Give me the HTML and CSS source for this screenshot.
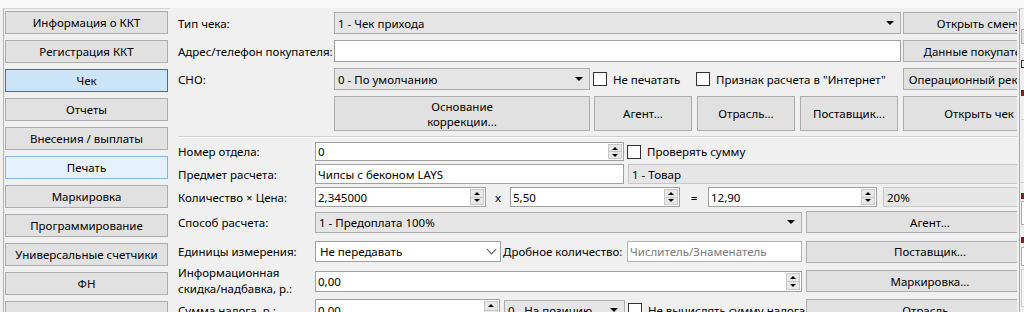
FILE: index.html
```html
<!DOCTYPE html>
<html lang="ru">
<head>
  <meta charset="UTF-8">
  <title>Чек</title>
  <link rel="stylesheet" href="styles.css">
</head>
<body>
  <div class="topbar"></div>
  <div class="frame">
    <div class="side">
      <div class="nav-btn">Информация о ККТ</div>
      <div class="nav-btn">Регистрация ККТ</div>
      <div class="nav-btn active">Чек</div>
      <div class="nav-btn">Отчеты</div>
      <div class="nav-btn">Внесения / выплаты</div>
      <div class="nav-btn hover">Печать</div>
      <div class="nav-btn">Маркировка</div>
      <div class="nav-btn">Программирование</div>
      <div class="nav-btn">Универсальные счетчики</div>
      <div class="nav-btn">ФН</div>
      <div class="nav-btn"></div>
    </div>

    <div class="main">
      <!-- шапка чека -->
      <div class="row">
        <div class="lbl1">Тип чека:</div>
        <div class="combo w567">1 - Чек прихода<span class="arr"></span></div>
        <div class="btn rbtn">Открыть смену</div>
      </div>
      <div class="row">
        <div class="lbl1">Адрес/телефон покупателя:</div>
        <div class="input w567"></div>
        <div class="btn rbtn">Данные покупателя</div>
      </div>
      <div class="row">
        <div class="lbl1">СНО:</div>
        <div class="combo w256">0 - По умолчанию<span class="arr"></span></div>
        <div class="chk-group g100"><span class="chk"></span>Не печатать</div>
        <div class="chk-group g205"><span class="chk"></span>Признак расчета в "Интернет"</div>
        <div class="btn rbtn">Операционный реквизит</div>
      </div>
      <div class="row tall">
        <div class="lbl1"></div>
        <div class="btn w256">Основание<br>коррекции...</div>
        <div class="btn w98 ml4">Агент...</div>
        <div class="btn w98 ml5">Отрасль...</div>
        <div class="btn w98 ml5">Поставщик...</div>
        <div class="btn rbtn">Открыть чек</div>
      </div>

      <div class="sep"></div>

      <!-- позиция -->
      <div class="row2 h19">
        <div class="lbl2">Номер отдела:</div>
        <div class="spin w309"><span class="val">0</span><span class="arrows"><i class="up"></i><i class="dn"></i></span></div>
        <div class="chk-group ml3"><span class="chk"></span>Проверять сумму</div>
      </div>
      <div class="row2 h20 mt3">
        <div class="lbl2">Предмет расчета:</div>
        <div class="input w309"><span class="val">Чипсы с беконом LAYS</span></div>
        <div class="combo flat w420 ml4">1 - Товар</div>
      </div>
      <div class="row2 h20 mt3">
        <div class="lbl2">Количество × Цена:</div>
        <div class="spin w171"><span class="val">2,345000</span><span class="arrows"><i class="up"></i><i class="dn"></i></span></div>
        <div class="op w24">x</div>
        <div class="spin w170"><span class="val">5,50</span><span class="arrows"><i class="up"></i><i class="dn"></i></span></div>
        <div class="op w28">=</div>
        <div class="spin w169"><span class="val">12,90</span><span class="arrows"><i class="up"></i><i class="dn"></i></span></div>
        <div class="combo flat w170 ml6">20%</div>
      </div>
      <div class="row2 h22 mt4">
        <div class="lbl2">Способ расчета:</div>
        <div class="combo w487">1 - Предоплата 100%<span class="arr"></span></div>
        <div class="btn wbtn ml4">Агент...</div>
      </div>
      <div class="row2 h23 mt7">
        <div class="lbl2">Единицы измерения:</div>
        <div class="combo white w186">Не передавать<span class="chev"></span></div>
        <div class="lbl-mid">Дробное количество:</div>
        <div class="input w175 ph"><span class="val">Числитель/Знаменатель</span></div>
        <div class="btn wbtn ml4">Поставщик...</div>
      </div>
      <div class="row2 h32 mt2">
        <div class="lbl2 two">Информационная<br>скидка/надбавка, р.:</div>
        <div class="spin w487 h21"><span class="val">0,00</span><span class="arrows"><i class="up"></i><i class="dn"></i></span></div>
        <div class="btn wbtn ml4">Маркировка...</div>
      </div>
      <div class="row2 h22 mt2">
        <div class="lbl2">Сумма налога, р.:</div>
        <div class="spin w185"><span class="val">0,00</span><span class="arrows"><i class="up"></i><i class="dn"></i></span></div>
        <div class="combo w121 ml4">0 - На позицию<span class="arr"></span></div>
        <div class="chk-group g178 ml3"><span class="chk"></span>Не вычислять сумму налога</div>
        <div class="btn wbtn">Отрасль...</div>
      </div>
    </div>

    <div class="rside">
      <div class="rs-box b1"></div>
      <div class="rs-chk"></div>
      <div class="rs-red r1"></div>
      <div class="rs-line l1"></div>
      <div class="rs-line l2"></div>
      <div class="rs-red r2"></div>
      <div class="rs-box b2"></div>
      <div class="rs-red r3"></div>
      <div class="rs-box b3"></div>
      <div class="rs-box b4"></div>
    </div>
  </div>
</body>
</html>
```

FILE: styles.css
```css
body {
  margin: 0;
  background-color: #f0f0f0;
  font-family: "Noto Sans", sans-serif;
  font-size: 11.5px;
  color: #000;
  height: 312px;
  overflow: hidden;
}

.topbar {
  height: 8px;
  background-color: #f9f9f9;
}

.frame {
  display: flex;
  height: 304px;
}

/* левое меню */
.side {
  flex: none;
  width: 167px;
  margin-left: 3px;
  padding: 2px 2px 0 1px;
  border-left: 1px solid #b4b4b4;
  border-top: 1px solid #d4d4d4;
  display: flex;
  flex-direction: column;
  gap: 6px;
  box-sizing: border-box;
  overflow: hidden;
}

.nav-btn {
  flex: none;
  height: 23px;
  box-sizing: border-box;
  border: 1px solid #adadad;
  background-color: #e1e1e1;
  display: flex;
  align-items: center;
  justify-content: center;
  white-space: nowrap;
}

.nav-btn.active {
  background-color: #cce4f7;
  border-color: #2f73b5;
}

.nav-btn.hover {
  background-color: #e5f1fb;
  border-color: #86b6e3;
}

/* основная область */
.main {
  flex: none;
  width: 847px;
  overflow: hidden;
  padding: 4px 0 0 8px;
  box-sizing: border-box;
}

.row {
  display: flex;
  align-items: center;
  height: 22px;
  margin-bottom: 6px;
  width: 900px;
}

.row.tall {
  height: 35px;
  margin-bottom: 0;
}

.lbl1 {
  flex: none;
  width: 156px;
  white-space: nowrap;
}

.btn {
  flex: none;
  box-sizing: border-box;
  height: 100%;
  border: 1px solid #adadad;
  background-color: #e1e1e1;
  display: flex;
  align-items: center;
  justify-content: center;
  text-align: center;
  line-height: 15px;
  white-space: nowrap;
}

.rbtn {
  width: 152px;
  margin-left: 2px;
}

.row.tall .rbtn {
  margin-left: 5px;
}

.wbtn {
  width: 248px;
  height: 22px;
}

.combo {
  flex: none;
  box-sizing: border-box;
  height: 100%;
  border: 1px solid #adadad;
  background-color: #e5e5e5;
  display: flex;
  align-items: center;
  padding-left: 3px;
  white-space: nowrap;
  overflow: hidden;
}

.combo.flat {
  background-color: #e6e6e6;
  border-color: #c8c8c8;
}

.combo.white {
  background-color: #fff;
  border-color: #a0a0a0;
  padding-left: 4px;
}

.arr {
  margin-left: auto;
  margin-right: 6px;
  width: 0;
  height: 0;
  border-left: 4px solid transparent;
  border-right: 4px solid transparent;
  border-top: 4px solid #000;
}

.chev {
  margin-left: auto;
  margin-right: 5px;
  width: 6px;
  height: 6px;
  border-right: 1px solid #555;
  border-bottom: 1px solid #555;
  transform: translateY(-2px) rotate(45deg);
}

.input {
  flex: none;
  box-sizing: border-box;
  height: 100%;
  border: 1px solid #a0a0a0;
  background-color: #fff;
  display: flex;
  align-items: center;
  white-space: nowrap;
  overflow: hidden;
}

.input.ph {
  color: #7a7a7a;
  border-color: #b4b4b4;
}

.val {
  padding-left: 2px;
  flex: 1;
}

.spin {
  flex: none;
  box-sizing: border-box;
  height: 100%;
  border: 1px solid #a0a0a0;
  background-color: #fff;
  display: flex;
  align-items: stretch;
  white-space: nowrap;
}

.spin .val {
  display: flex;
  align-items: center;
}

.arrows {
  flex: none;
  width: 12px;
  margin: 1px;
  display: flex;
  flex-direction: column;
  border: 1px solid #c8c8c8;
  background-color: #e8e8e8;
}

.arrows i {
  flex: 1;
  display: flex;
  align-items: center;
  justify-content: center;
}

.arrows i + i {
  border-top: 1px solid #c8c8c8;
}

.arrows i::after {
  content: "";
  width: 0;
  height: 0;
  border-left: 3px solid transparent;
  border-right: 3px solid transparent;
}

.arrows .up::after {
  border-bottom: 3px solid #000;
}

.arrows .dn::after {
  border-top: 3px solid #000;
}

.chk-group {
  flex: none;
  display: flex;
  align-items: center;
  white-space: nowrap;
  margin-left: 3px;
}

.chk {
  flex: none;
  width: 14px;
  height: 14px;
  box-sizing: border-box;
  border: 1px solid #333;
  background-color: #fff;
  margin-right: 6px;
}

.g100 { width: 100px; }
.g205 { width: 205px; }
.g178 { width: 178px; }

.sep {
  width: 900px;
  height: 1px;
  background-color: #d2d2d2;
  border-bottom: 1px solid #fcfcfc;
  margin: 5px 0 4px;
}

.row2 {
  display: flex;
  align-items: center;
  width: 900px;
}

.lbl2 {
  flex: none;
  width: 137px;
  white-space: nowrap;
}

.lbl2.two {
  line-height: 16px;
}

.lbl-mid {
  flex: none;
  width: 126px;
  padding-left: 2px;
  box-sizing: border-box;
  white-space: nowrap;
}

.op {
  flex: none;
  text-align: center;
}

.h19 { height: 19px; }
.h20 { height: 20px; }
.h22 { height: 22px; }
.h23 { height: 23px; }
.h32 { height: 32px; }
.spin.h21 { height: 21px; }
.row2.h23 .combo,
.row2.h23 .input { height: 21px; }
.row2.h22 .combo { height: 21px; }

.mt2 { margin-top: 2px; }
.mt3 { margin-top: 3px; }
.mt4 { margin-top: 4px; }
.mt7 { margin-top: 7px; }
.ml3 { margin-left: 3px; }
.ml4 { margin-left: 4px; }
.ml5 { margin-left: 5px; }
.ml6 { margin-left: 6px; }

.w24 { width: 24px; }
.w28 { width: 28px; }
.w98 { width: 98px; }
.w121 { width: 121px; }
.w169 { width: 169px; }
.w170 { width: 170px; }
.w171 { width: 171px; }
.w175 { width: 175px; }
.w185 { width: 185px; }
.w186 { width: 186px; }
.w256 { width: 256px; }
.w309 { width: 309px; }
.w420 { width: 420px; }
.w487 { width: 487px; }
.w567 { width: 567px; }

/* правая панель (обрезана) */
.rside {
  flex: none;
  width: 5px;
  margin-left: 2px;
  border-left: 1px solid #a9a9a9;
  border-top: 1px solid #d4d4d4;
  box-sizing: border-box;
  overflow: hidden;
  display: flex;
  flex-direction: column;
  padding-left: 1px;
}

.rs-box {
  flex: none;
  border: 1px solid #adadad;
  background-color: #e1e1e1;
  width: 10px;
}

.rs-chk {
  flex: none;
  height: 6px;
  margin-top: 16px;
  border: 1px solid #333;
  width: 10px;
}

.rs-red {
  flex: none;
  height: 6px;
  background-color: #8b1a1a;
}

.rs-line {
  flex: none;
  height: 1px;
  background-color: #cfcfcf;
}

.b1 { height: 13px; margin-top: 20px; }
.r1 { margin-top: 22px; }
.l1 { margin-top: 23px; }
.l2 { margin-top: 62px; }
.r2 { margin-top: 10px; }
.b2 { height: 22px; margin-top: 2px; background-color: #fff; }
.r3 { margin-top: 12px; }
.b3 { height: 17px; margin-top: 4px; background-color: #fff; }
.b4 { height: 36px; margin-top: 3px; background-color: #f4f4f4; border-color: #d0d0d0; }
```
